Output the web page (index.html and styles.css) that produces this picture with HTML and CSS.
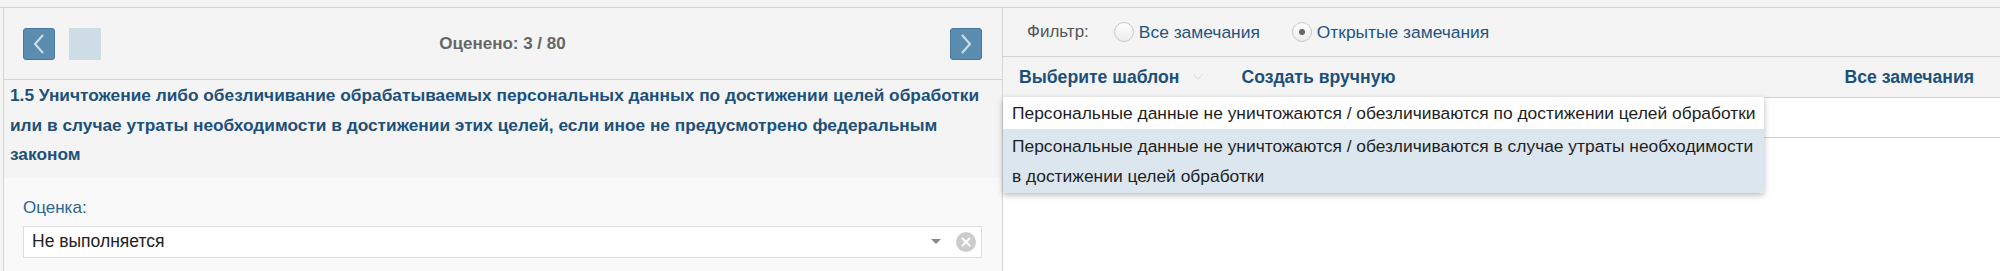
FILE: index.html
```html
<!DOCTYPE html>
<html lang="ru">
<head>
<meta charset="utf-8">
<title>Оценка</title>
<link rel="stylesheet" href="styles.css">
</head>
<body>
<div class="page">
  <section class="left">
    <div class="nav">
      <button class="nav-btn" aria-label="Назад">
        <svg width="14" height="22" viewBox="0 0 14 22"><path d="M11 2 L3 11 L11 20" fill="none" stroke="#d3dfe8" stroke-width="2"/></svg>
      </button>
      <div class="nav-ghost"></div>
      <div class="nav-title">Оценено: 3 / 80</div>
      <button class="nav-btn" aria-label="Вперёд">
        <svg width="14" height="22" viewBox="0 0 14 22"><path d="M3 2 L11 11 L3 20" fill="none" stroke="#d3dfe8" stroke-width="2"/></svg>
      </button>
    </div>
    <div class="question">1.5 Уничтожение либо обезличивание обрабатываемых персональных данных по достижении целей обработки или в случае утраты необходимости в достижении этих целей, если иное не предусмотрено федеральным законом</div>
    <div class="form">
      <div class="label">Оценка:</div>
      <div class="select">
        <span class="select-value">Не выполняется</span>
        <span class="select-arrow"></span>
        <span class="select-clear">
          <svg width="20" height="20" viewBox="0 0 20 20"><circle cx="10" cy="10" r="10" fill="#cccccc"/><path d="M6 6 L14 14 M14 6 L6 14" stroke="#fff" stroke-width="2"/></svg>
        </span>
      </div>
    </div>
  </section>
  <section class="right">
    <div class="filter">
      <span class="filter-label">Фильтр:</span>
      <span class="radio"></span><span class="radio-label">Все замечания</span>
      <span class="radio checked"></span><span class="radio-label">Открытые замечания</span>
    </div>
    <div class="tabs">
      <span class="tab">Выберите шаблон</span>
      <svg class="tab-chevron" width="12" height="8" viewBox="0 0 12 8"><path d="M1 1 L6 6 L11 1" fill="none" stroke="#e2e6ea" stroke-width="1.5"/></svg>
      <span class="tab tab-manual">Создать вручную</span>
      <span class="tab tab-all">Все замечания</span>
    </div>
    <div class="search">
      <div class="dropdown">
        <div class="dd-item">Персональные данные не уничтожаются / обезличиваются по достижении целей обработки</div>
        <div class="dd-item active">Персональные данные не уничтожаются / обезличиваются в случае утраты необходимости в достижении целей обработки</div>
      </div>
    </div>
  </section>
</div>
</body>
</html>
```
FILE: styles.css
```css
html, body {
  margin: 0;
  padding: 0;
  height: 271px;
  overflow: hidden;
  background: #f4f4f4;
  font-family: "Liberation Sans", Arial, Helvetica, sans-serif;
  font-size: 16px;
}
.page {
  display: flex;
  margin-top: 7px;
  border-top: 1px solid #d3d3d3;
  height: 263px;
}
.left {
  width: 998px;
  margin-left: 3px;
  border-left: 1px solid #d6d6d6;
  border-right: 1px solid #d6d6d6;
  display: flex;
  flex-direction: column;
  background: #f9f9f9;
}
.nav {
  height: 71px;
  border-bottom: 1px solid #d3d3d3;
  display: flex;
  align-items: center;
  padding: 0 20px 0 19px;
  background: #f4f4f4;
}
.nav-btn {
  width: 32px;
  height: 32px;
  padding: 0;
  border: 1px solid #44789c;
  border-radius: 3px;
  background: #5b8db1;
  display: flex;
  align-items: center;
  justify-content: center;
}
.nav-ghost {
  width: 32px;
  height: 32px;
  margin-left: 14px;
  background: #cfdde7;
}
.nav-title {
  flex: 1;
  text-align: center;
  font-weight: bold;
  font-size: 17px;
  color: #666666;
  padding-right: 46px;
}
.question {
  background: #f4f4f4;
  padding: 1px 0 8px 6px;
  font-weight: bold;
  font-size: 17.3px;
  line-height: 29.5px;
  color: #1d5079;
}
.form {
  padding: 20px 20px 0 19px;
}
.label {
  line-height: 20px;
  font-size: 17px;
  color: #2a6592;
  margin-bottom: 8px;
}
.select {
  height: 30px;
  border: 1px solid #dedede;
  background: #fff;
  display: flex;
  align-items: center;
  padding: 0 5px 0 8px;
}
.select-value {
  flex: 1;
  color: #222;
  font-size: 17.5px;
}
.select-arrow {
  width: 0;
  height: 0;
  border-left: 5px solid transparent;
  border-right: 5px solid transparent;
  border-top: 5px solid #888;
  margin-right: 15px;
}
.select-clear {
  display: flex;
  width: 20px;
  height: 20px;
}
.right {
  flex: 1;
  display: flex;
  flex-direction: column;
  background: #fff;
}
.filter {
  height: 48px;
  border-bottom: 1px solid #d3d3d3;
  display: flex;
  align-items: center;
  padding-left: 24px;
  background: #f4f4f4;
}
.filter-label {
  color: #555;
  font-size: 17px;
  margin-right: 25px;
}
.radio {
  width: 18px;
  height: 18px;
  border: 1px solid #c8c8c8;
  border-radius: 50%;
  background: linear-gradient(#ffffff, #ececec);
  margin-right: 5px;
  display: flex;
  align-items: center;
  justify-content: center;
}
.radio.checked::after {
  content: "";
  width: 6px;
  height: 6px;
  border-radius: 50%;
  background: #666;
}
.radio-label {
  color: #1f5580;
  font-size: 17.4px;
  margin-right: 32px;
}
.tabs {
  height: 40px;
  display: flex;
  align-items: center;
  padding: 0 26px 0 16px;
  background: #f4f4f4;
}
.tab {
  font-weight: bold;
  font-size: 17.6px;
  color: #1d5079;
}
.tab-chevron {
  margin-left: 13px;
}
.tab-manual {
  margin-left: 37px;
}
.tab-all {
  margin-left: auto;
}
.search {
  position: relative;
  height: 39px;
  border-top: 1px solid #d0d0d0;
  border-bottom: 1px solid #d0d0d0;
  background: #fff;
}
.dropdown {
  position: absolute;
  left: 0;
  top: -1px;
  width: 761px;
  background: #fff;
  box-shadow: 0 2px 6px rgba(0, 0, 0, 0.28);
  z-index: 2;
}
.dd-item {
  padding: 1px 7px 1px 9px;
  line-height: 30px;
  color: #1e1e1e;
  font-size: 17.4px;
}
.dd-item.active {
  background: #dce6ee;
  padding: 2px 7px 2px 9px;
}
```
